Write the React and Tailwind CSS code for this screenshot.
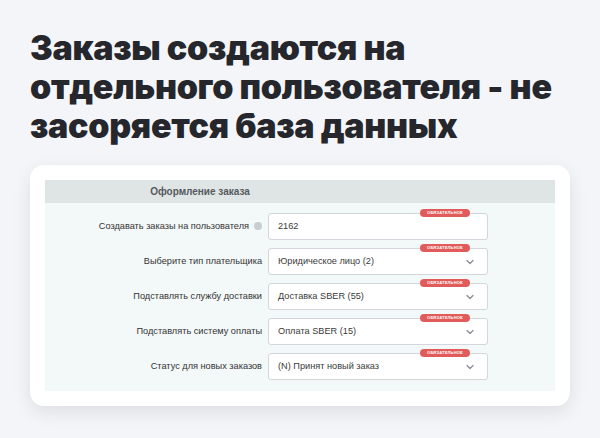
import React from 'react'

const rows = [
  { label: 'Создавать заказы на пользователя', value: '2162', hint: true, select: false },
  { label: 'Выберите тип плательщика', value: 'Юридическое лицо (2)', select: true },
  { label: 'Подставлять службу доставки', value: 'Доставка SBER (55)', select: true },
  { label: 'Подставлять систему оплаты', value: 'Оплата SBER (15)', select: true },
  { label: 'Статус для новых заказов', value: '(N) Принят новый заказ', select: true }
]

const Chevron = () => (
  <svg width="10" height="10" viewBox="0 0 10 10" fill="none" className="text-[#8a8f96]">
    <path d="M2 3.5 L5 6.5 L8 3.5" stroke="currentColor" strokeWidth="1.3" strokeLinecap="round" strokeLinejoin="round" />
  </svg>
)

const FieldRow = ({ label, value, hint, select }) => (
  <div className="flex items-center h-[27px]">
    <div className="w-[223px] pr-[6px] flex items-center justify-end text-[9.2px] text-[#333] gap-[5px]">
      <span>{label}</span>
      {hint && <span className="w-[8px] h-[8px] rounded-full bg-[#c9cdd1] inline-block" />}
    </div>
    <div className="relative w-[220px] h-[27px] bg-white border border-[#d3d6da] rounded-[3px] flex items-center justify-between pl-[9px] pr-[12px] text-[9.2px] text-[#3a3a3a]">
      <span>{value}</span>
      {select && <Chevron />}
      {/* required badge sitting on the top border */}
      <span className="absolute -top-[5px] left-[151px] h-[8px] w-[50px] rounded-full bg-[#e25b5b] text-white text-[4px] leading-[8px] text-center font-bold tracking-[0.2px]">
        ОБЯЗАТЕЛЬНОЕ
      </span>
    </div>
  </div>
)

export default function App() {
  return (
    <div className="w-[600px] h-[438px] bg-[#f4f5f8] overflow-hidden" style={{ fontFamily: '"Liberation Sans", Arial, sans-serif' }}>
      <h1
        className="pl-[30px] pt-[28px] text-[34px] leading-[39px] font-black text-[#25272c] tracking-[-0.3px]"
        style={{ fontFamily: 'Inter, "Noto Sans", sans-serif' }}
      >
        Заказы создаются на
        <br />
        отдельного пользователя - не
        <br />
        засоряется база данных
      </h1>

      <div className="mx-[30px] mt-[20px] bg-white rounded-[14px] p-[15px] shadow-[0_6px_18px_rgba(30,40,60,0.10)]">
        <div className="bg-[#f3f8f9]">
          <div className="h-[23px] bg-[#dfe5e5] flex items-center">
            <div className="w-[310px] text-center text-[10px] font-bold text-[#555a5e]">Оформление заказа</div>
          </div>
          <div className="pt-[10px] pb-[11px] flex flex-col gap-[8px]">
            {rows.map(r => (
              <FieldRow key={r.label} {...r} />
            ))}
          </div>
        </div>
      </div>
    </div>
  )
}
